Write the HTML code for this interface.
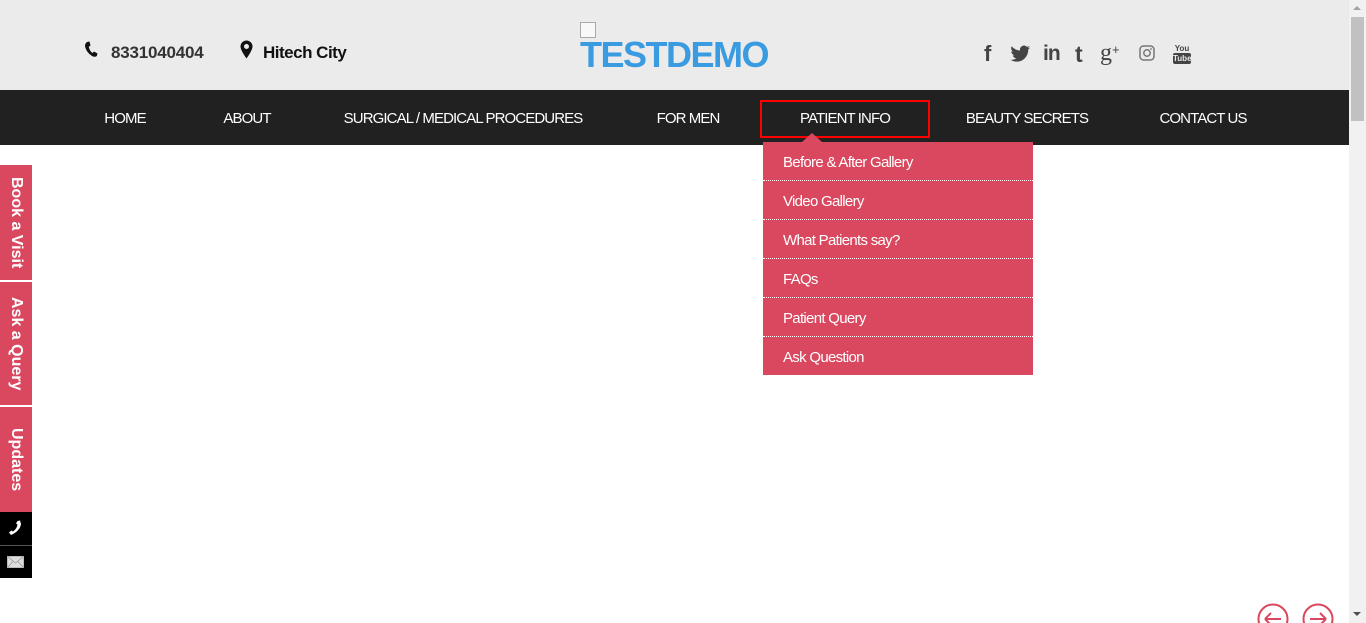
<!DOCTYPE html>
<html><head><meta charset="utf-8"><style>
*{margin:0;padding:0;box-sizing:border-box}
html,body{width:1366px;height:623px;overflow:hidden}
body{background:#fff;font-family:"Liberation Sans",sans-serif;position:relative}
.hdr{position:absolute;left:0;top:0;width:1349px;height:90px;background:#ebebeb}
.nav{position:absolute;left:0;top:90px;width:1349px;height:55px;background:#212121}
.nav span{position:absolute;top:1px;line-height:55px;color:#fff;font-size:15px;letter-spacing:-0.9px;transform:translateX(-50%);white-space:nowrap}
.sel{position:absolute;left:760px;top:100px;width:170px;height:38px;border:2px solid #f00}
.dd{position:absolute;left:763px;top:142px;width:270px;background:#d9485f}
.dd div{height:39px;line-height:41px;color:#fff;font-size:15px;letter-spacing:-0.7px;padding-left:20px;border-bottom:1px dotted #fff}
.dd div:last-child{border-bottom:none;height:38px}
.tri{position:absolute;left:802px;top:133px;width:0;height:0;border-left:10px solid transparent;border-right:10px solid transparent;border-bottom:9px solid #d9485f}
.tab{position:absolute;left:0;width:32px;background:#d9485f;color:#fff;font-weight:bold;font-size:16px;writing-mode:vertical-rl;text-align:center;line-height:32px}
.blk{position:absolute;left:0;width:32px;background:#000}
.sb{position:absolute;left:1349px;top:0;width:17px;height:623px;background:#f1f1f1}
</style></head><body>
<div class="hdr">
 <svg style="position:absolute;left:84px;top:41px" width="14" height="17" viewBox="0 0 14 17"><path d="M3 1 L5.5 0.5 L6.5 4.5 L4.8 5.8 Q5.5 10 8.5 12 L10 10.5 L13.5 12.5 L12.8 15 Q11 16.5 8 15 Q2.5 11.5 1 5.5 Q0.8 2.5 3 1Z" fill="#111"/></svg>
 <div style="position:absolute;left:111px;top:43px;font-size:17px;font-weight:bold;color:#333;letter-spacing:-0.2px">8331040404</div>
 <svg style="position:absolute;left:240px;top:40px" width="13" height="19" viewBox="0 0 13 19"><path d="M6.5 0.5 A6 6 0 0 1 12.5 6.5 Q12.5 10 6.5 18.5 Q0.5 10 0.5 6.5 A6 6 0 0 1 6.5 0.5Z M6.5 4 A2.5 2.5 0 1 0 6.5 9 A2.5 2.5 0 1 0 6.5 4Z" fill="#111" fill-rule="evenodd"/></svg>
 <div style="position:absolute;left:263px;top:43px;font-size:17px;font-weight:bold;color:#111;letter-spacing:-0.5px">Hitech City</div>
 <div style="position:absolute;left:580px;top:22px;width:16px;height:16px;border:1px solid #aaa;background:#f8f8f8"></div>
 <div style="position:absolute;left:580px;top:34px;font-size:36px;font-weight:bold;color:#3a9be0;letter-spacing:-1.5px">TESTDEMO</div>
 <div style="position:absolute;left:984px;top:42px;font-size:22px;font-weight:bold;color:#444;line-height:24px">f</div>
 <svg style="position:absolute;left:1010px;top:45px" width="21" height="18" viewBox="0 0 24 20"><path d="M23 2.5a9 9 0 0 1-2.7.8 4.7 4.7 0 0 0 2-2.6 9 9 0 0 1-3 1.1A4.6 4.6 0 0 0 11.5 6 13 13 0 0 1 2 1.2a4.6 4.6 0 0 0 1.4 6.2 4.6 4.6 0 0 1-2-.6 4.6 4.6 0 0 0 3.7 4.6 4.6 4.6 0 0 1-2 .1 4.6 4.6 0 0 0 4.3 3.2A9.3 9.3 0 0 1 .5 16.6 13 13 0 0 0 7.6 18.7c8.5 0 13.2-7.1 13.2-13.2v-.6A9.3 9.3 0 0 0 23 2.5z" fill="#444"/></svg>
 <div style="position:absolute;left:1043px;top:42px;font-size:21px;font-weight:bold;color:#444;letter-spacing:-1px">in</div>
 <div style="position:absolute;left:1075px;top:41px;font-size:23px;font-weight:bold;color:#444">t</div>
 <div style="position:absolute;left:1100px;top:40px;font-family:'Liberation Serif',serif;font-size:24px;color:#444">g<span style="font-size:13px;vertical-align:6px;font-family:'Liberation Sans'">+</span></div>
 <svg style="position:absolute;left:1139px;top:45px" width="16" height="16" viewBox="0 0 16 16"><rect x="1" y="1" width="14" height="14" rx="3.5" fill="none" stroke="#777" stroke-width="1.5"/><circle cx="8" cy="8" r="3.2" fill="none" stroke="#777" stroke-width="1.5"/><circle cx="12" cy="4" r="0.9" fill="#777"/></svg>
 <div style="position:absolute;left:1173px;top:44px;width:18px;height:22px">
  <div style="font-size:8px;font-weight:bold;color:#444;text-align:center;line-height:9px">You</div>
  <div style="background:#444;color:#ebebeb;font-size:8px;font-weight:bold;text-align:center;line-height:11px;border-radius:2px">Tube</div>
 </div>
</div>
<div class="nav">
 <span style="left:125px">HOME</span><span style="left:247px">ABOUT</span><span style="left:463px">SURGICAL / MEDICAL PROCEDURES</span><span style="left:688px">FOR MEN</span><span style="left:845px">PATIENT INFO</span><span style="left:1027px">BEAUTY SECRETS</span><span style="left:1203px">CONTACT US</span>
</div>
<div class="sel"></div>
<div class="tri"></div>
<div class="dd"><div>Before &amp; After Gallery</div><div>Video Gallery</div><div>What Patients say?</div><div>FAQs</div><div>Patient Query</div><div>Ask Question</div></div>
<div class="tab" style="top:165px;height:115px">Book a Visit</div>
<div class="tab" style="top:282px;height:123px">Ask a Query</div>
<div class="tab" style="top:407px;height:105px">Updates</div>
<div class="blk" style="top:512px;height:33px"><svg style="position:absolute;left:8px;top:8px" width="14" height="16" viewBox="0 0 14 16"><path d="M9.5 1 L12 0.5 L13 4 Q12 11 3 15 L1 12.5 L3.5 10.5 L5 11.5 Q9 8.5 9.5 4.5 L8 3.5Z" fill="#fff"/></svg></div>
<div style="position:absolute;left:0;top:545px;width:32px;height:1px;background:#555"></div>
<div class="blk" style="top:546px;height:32px"><svg style="position:absolute;left:7px;top:10px" width="17" height="12" viewBox="0 0 17 12"><rect x="0.5" y="0.5" width="16" height="11" fill="#ddd" stroke="#bbb"/><path d="M0.5 0.5 L8.5 7 L16.5 0.5 M0.5 11.5 L6 5.5 M16.5 11.5 L11 5.5" stroke="#999" fill="none" stroke-width="0.8"/></svg></div>
<svg style="position:absolute;left:1257px;top:603px" width="80" height="20" viewBox="0 0 80 20"><circle cx="16" cy="16" r="14.5" fill="none" stroke="#d9485f" stroke-width="2"/><path d="M8 16 H24 M8 16 L14 10 M8 16 L14 22" stroke="#d9485f" stroke-width="2" fill="none"/><circle cx="61" cy="16" r="14.5" fill="none" stroke="#d9485f" stroke-width="2"/><path d="M53 16 H69 M69 16 L63 10 M69 16 L63 22" stroke="#d9485f" stroke-width="2" fill="none"/></svg>
<div class="sb">
 <div style="position:absolute;left:4px;top:6px;width:0;height:0;border-left:4px solid transparent;border-right:4px solid transparent;border-bottom:4px solid #a3a3a3"></div>
 <div style="position:absolute;left:2px;top:17px;width:13px;height:104px;background:#c1c1c1"></div>
 <div style="position:absolute;left:4px;top:612px;width:0;height:0;border-left:4px solid transparent;border-right:4px solid transparent;border-top:4px solid #505050"></div>
</div>
</body></html>
